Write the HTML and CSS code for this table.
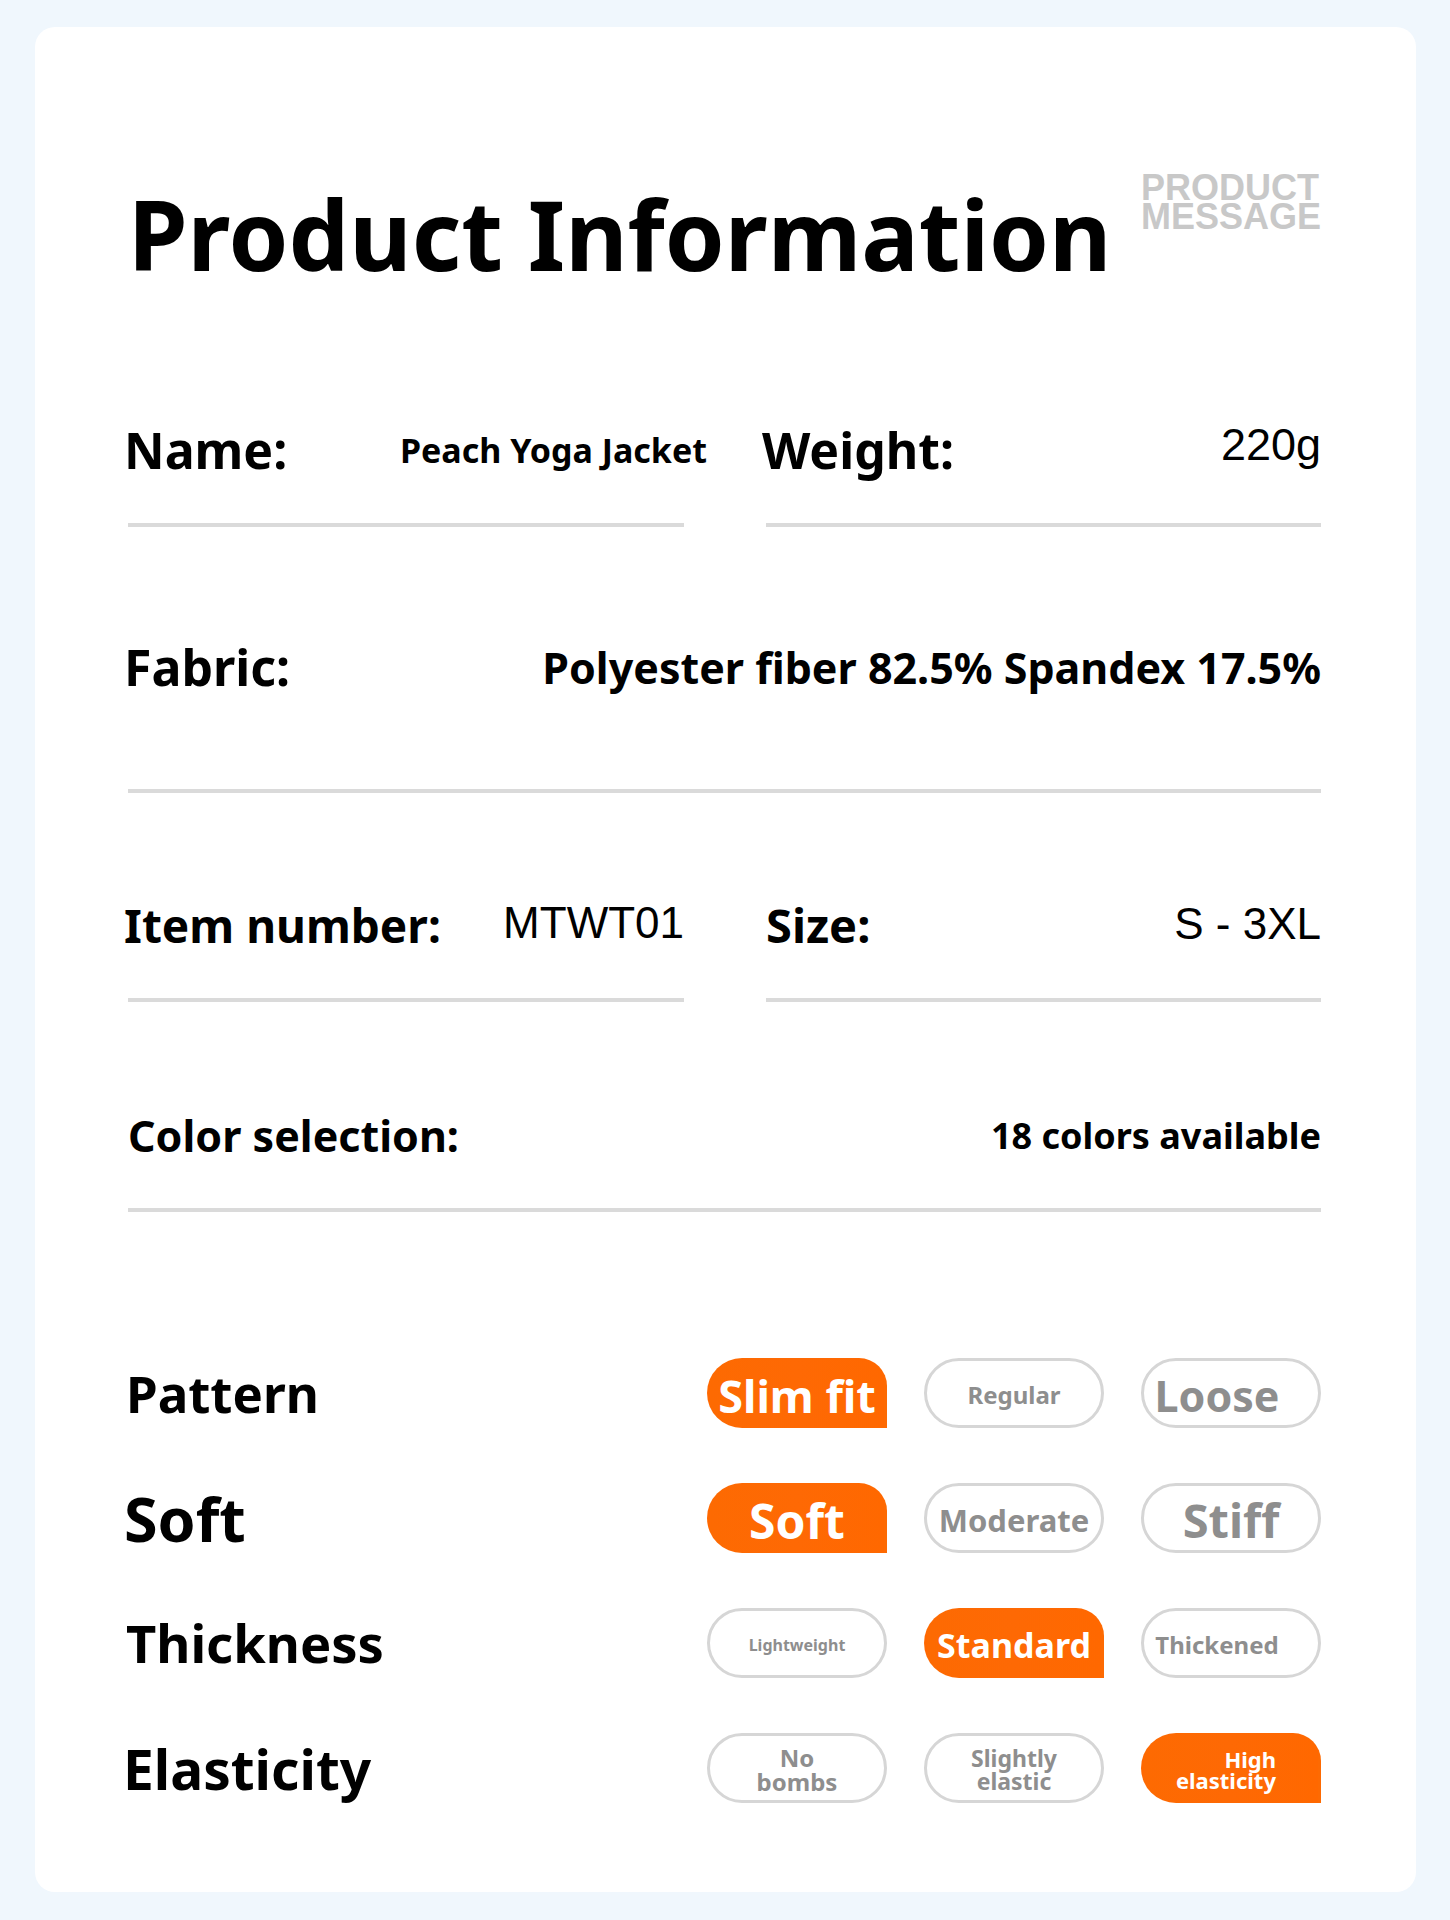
FILE: index.html
```html
<!DOCTYPE html>
<html lang="en">
  <head>
    <meta charset="UTF-8" />
    <meta name="viewport" content="width=device-width, initial-scale=1.0" />
    <title>Product Information</title>
    <link rel="stylesheet" href="styles.css">
  </head>
  <body>
    <div class="card">
      <header class="head">
        <h1 class="title">Product Information</h1>
        <div class="tag">PRODUCT<br />MESSAGE</div>
      </header>

      <div class="pair">
        <div class="row">
          <span class="key">Name:</span>
          <span class="val val-jacket">Peach Yoga Jacket</span>
        </div>
        <div class="row">
          <span class="key">Weight:</span>
          <span class="num num-weight">220g</span>
        </div>
      </div>

      <div class="row row-fabric">
        <span class="key">Fabric:</span>
        <span class="val val-fabric">Polyester fiber 82.5% Spandex 17.5%</span>
      </div>

      <div class="pair pair-item">
        <div class="row">
          <span class="key key-item">Item number:</span>
          <span class="num num-item">MTWT01</span>
        </div>
        <div class="row">
          <span class="key key-size">Size:</span>
          <span class="num num-size">S - 3XL</span>
        </div>
      </div>

      <div class="row row-color">
        <span class="key key-color">Color selection:</span>
        <span class="val val-color">18 colors available</span>
      </div>

      <div class="attrs">
        <div class="attr">
          <span class="attr-name name-pattern">Pattern</span>
          <div class="pills">
            <div class="pill on s45">Slim fit</div>
            <div class="pill s24">Regular</div>
            <div class="pill s43 pill-left">Loose</div>
          </div>
        </div>
        <div class="attr">
          <span class="attr-name name-soft">Soft</span>
          <div class="pills">
            <div class="pill on s48">Soft</div>
            <div class="pill s31">Moderate</div>
            <div class="pill s47">Stiff</div>
          </div>
        </div>
        <div class="attr">
          <span class="attr-name name-thick">Thickness</span>
          <div class="pills">
            <div class="pill s16">Lightweight</div>
            <div class="pill on s34">Standard</div>
            <div class="pill s24 pill-left">Thickened</div>
          </div>
        </div>
        <div class="attr">
          <span class="attr-name name-elastic">Elasticity</span>
          <div class="pills">
            <div class="pill two s24">No<br />bombs</div>
            <div class="pill two s23">Slightly<br />elastic</div>
            <div class="pill two on s22 pill-right">High<br />elasticity</div>
          </div>
        </div>
      </div>
    </div>
  </body>
</html>
```

FILE: styles.css
```css
body {
  margin: 0;
  background-color: #f0f7fd;
  font-family: "Noto Sans", "Open Sans", sans-serif;
  color: #000;
}
.card {
  box-sizing: border-box;
  width: 1381px;
  height: 1865px;
  margin: 27px 0 28px 35px;
  padding: 0 95px 0 93px;
  background-color: #fff;
  border-radius: 20px;
  overflow: hidden;
}

/* header */
.head {
  display: flex;
  justify-content: space-between;
  align-items: flex-start;
  padding-top: 146px;
}
.title {
  margin: 12px 0 0;
  font-size: 96px;
  line-height: 97px;
  font-weight: 700;
}
.tag {
  font-family: "Liberation Sans", Arial, sans-serif;
  font-weight: 700;
  font-size: 36px;
  line-height: 29px;
  color: #c8c8c8;
}

/* info rows */
.pair {
  display: grid;
  grid-template-columns: 556px 555px;
  column-gap: 82px;
  margin-top: 138px;
}
.pair-item {
  margin-top: 102px;
}
.row {
  display: flex;
  align-items: center;
  justify-content: space-between;
  height: 60px;
  padding-bottom: 43px;
  border-bottom: 4px solid #dadada;
  white-space: nowrap;
}
.row-fabric {
  margin-top: 110px;
  padding-bottom: 92px;
}
.row-color {
  margin-top: 103px;
}
.key {
  margin-left: -4px;
  font-size: 50px;
  font-weight: 700;
}
.key-item {
  font-size: 46px;
}
.key-size {
  margin-left: 0;
  font-size: 47px;
}
.key-color {
  margin-left: 0;
  font-size: 43px;
}
.val {
  font-weight: 700;
}
.val-jacket {
  font-size: 34px;
  margin-right: -23px;
}
.val-fabric {
  font-size: 43px;
}
.val-color {
  font-size: 36px;
}
.num {
  font-family: "Liberation Sans", Arial, sans-serif;
  font-size: 44px;
}
.num-weight {
  font-size: 45px;
  margin-bottom: 10px;
}
.num-item {
  margin-bottom: 5px;
}
.num-size {
  margin-bottom: 3px;
}

/* attributes */
.attrs {
  display: flex;
  flex-direction: column;
  gap: 55px;
  margin-top: 146px;
}
.attr {
  display: flex;
  align-items: center;
  justify-content: space-between;
  height: 70px;
}
.attr-name {
  margin-left: -2px;
  font-weight: 700;
  line-height: 1;
}
.name-pattern {
  font-size: 51px;
}
.name-soft {
  font-size: 61px;
  margin-left: -4px;
}
.name-thick {
  font-size: 52.5px;
}
.name-elastic {
  font-size: 55px;
  margin-left: -5px;
}
.pills {
  display: flex;
  gap: 37px;
}
.pill {
  box-sizing: border-box;
  width: 180px;
  height: 70px;
  padding-top: 4px;
  display: flex;
  align-items: center;
  justify-content: center;
  text-align: center;
  border: 3px solid #d6d6d6;
  border-radius: 35px;
  color: #8e8e8e;
  font-weight: 700;
  white-space: nowrap;
}
.pill.on {
  background: linear-gradient(90deg, #fd6a02, #fe6904 50%, #ff6800);
  border-color: transparent;
  border-radius: 35px 28px 0 35px;
  color: #fff;
}
.pill-left {
  padding-right: 28px;
}
.pill-right {
  justify-content: flex-end;
  text-align: right;
  padding-right: 42px;
}
.pill.two {
  padding-top: 4px;
}
.pill-right.two {
  padding-top: 3px;
}
.s16 { font-size: 16px; }
.s22 { font-size: 22px; line-height: 21px; }
.s23 { font-size: 23px; line-height: 23px; }
.s24 { font-size: 24px; line-height: 24px; }
.s31 { font-size: 31px; }
.s34 { font-size: 34px; }
.s43 { font-size: 43px; }
.s45 { font-size: 45px; }
.s47 { font-size: 47px; }
.s48 { font-size: 48px; }
```
